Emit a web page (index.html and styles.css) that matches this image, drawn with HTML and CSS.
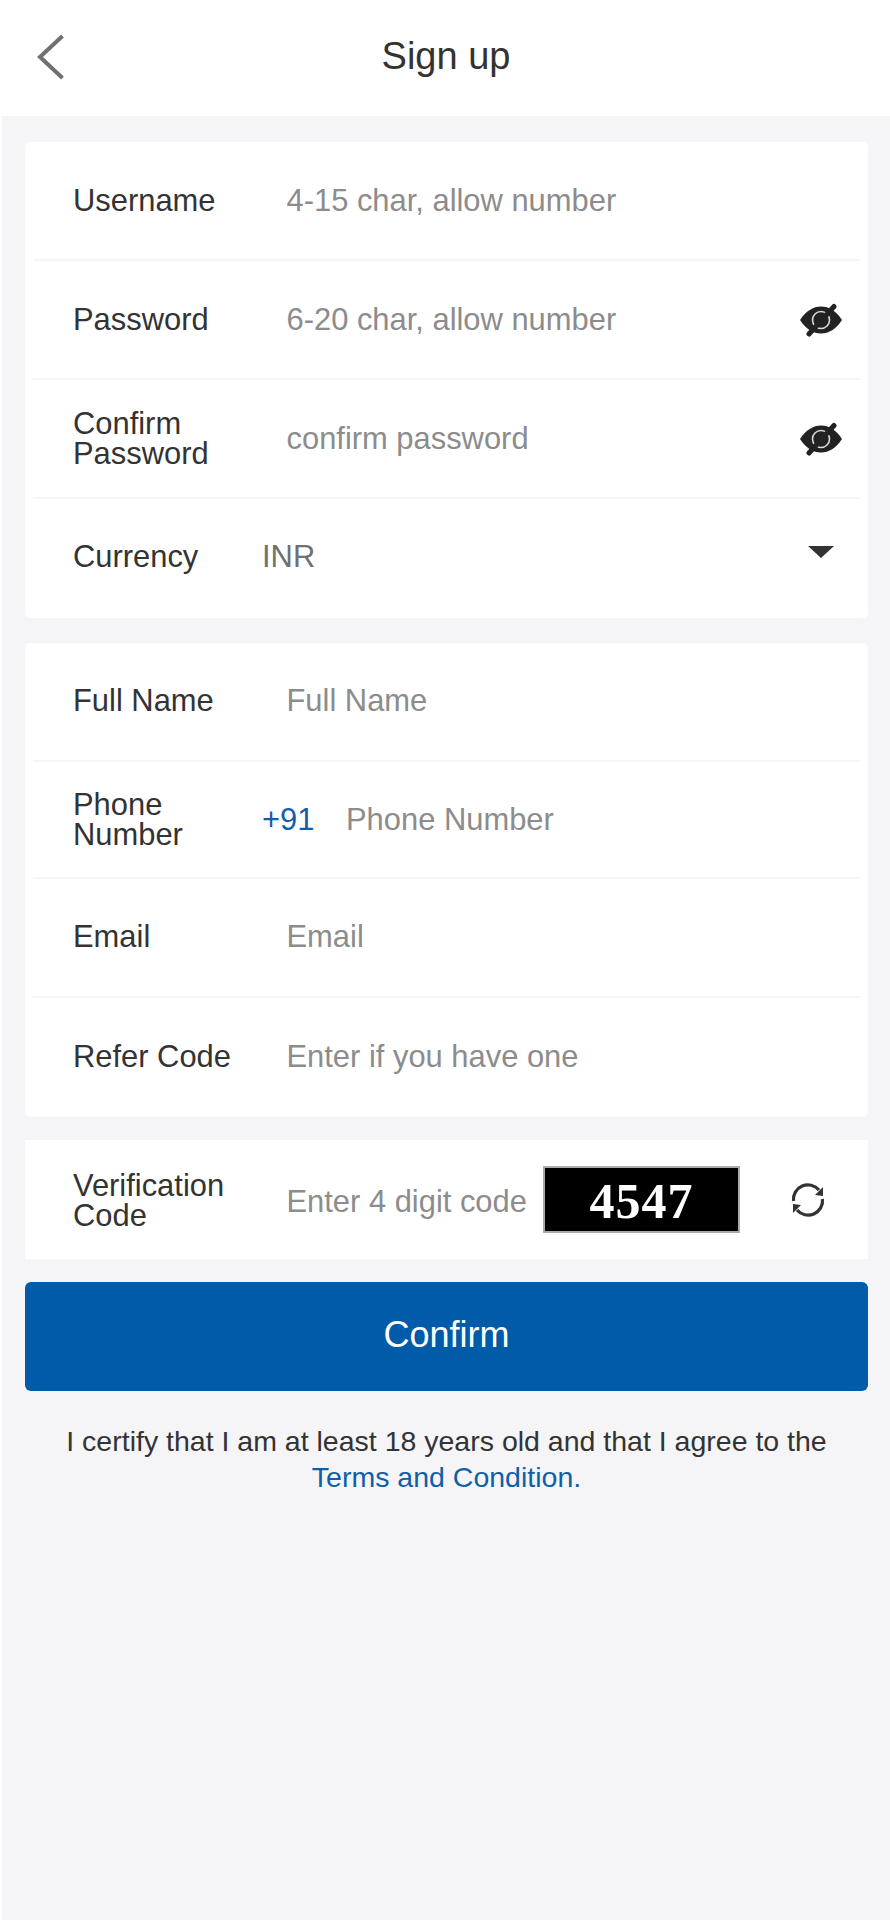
FILE: index.html
```html
<!DOCTYPE html>
<html lang="en">
<head>
    <meta charset="UTF-8">
    <meta name="viewport" content="width=device-width, initial-scale=1.0">
    <title>Sign up</title>
    <link rel="stylesheet" href="styles.css">
</head>

<body>
    <div class="header">
        <svg class="back" viewBox="0 0 28 46"><path d="M25.5 2 L3 23 L25.5 44"/></svg>
        <h1>Sign up</h1>
    </div>

    <div class="content">
        <div class="card">
            <div class="row">
                <label>Username</label>
                <input type="text" placeholder="4-15 char, allow number">
            </div>
            <div class="row">
                <label>Password</label>
                <input type="text" placeholder="6-20 char, allow number">
                <svg class="eye" viewBox="0 0 44 34">
                    <path d="M1 17 C7 8 14 3.5 22 3.5 C30 3.5 37 8 43 17 C37 26 30 30.5 22 30.5 C14 30.5 7 26 1 17 Z"/>
                    <circle class="ring" cx="22" cy="17" r="8.5"/>
                    <circle cx="22" cy="17" r="6.5"/>
                    <path class="slash" d="M10 31 L35 3.5"/>
                </svg>
            </div>
            <div class="row">
                <label>Confirm Password</label>
                <input type="text" placeholder="confirm password">
                <svg class="eye" viewBox="0 0 44 34">
                    <path d="M1 17 C7 8 14 3.5 22 3.5 C30 3.5 37 8 43 17 C37 26 30 30.5 22 30.5 C14 30.5 7 26 1 17 Z"/>
                    <circle class="ring" cx="22" cy="17" r="8.5"/>
                    <circle cx="22" cy="17" r="6.5"/>
                    <path class="slash" d="M10 31 L35 3.5"/>
                </svg>
            </div>
            <div class="row row-select">
                <label class="label-short">Currency</label>
                <span class="value">INR</span>
                <span class="caret"></span>
            </div>
        </div>

        <div class="card card-form">
            <div class="row">
                <label>Full Name</label>
                <input type="text" placeholder="Full Name">
            </div>
            <div class="row row-phone">
                <label class="label-short">Phone Number</label>
                <span class="code">+91</span>
                <input type="text" placeholder="Phone Number">
            </div>
            <div class="row">
                <label>Email</label>
                <input type="text" placeholder="Email">
            </div>
            <div class="row">
                <label>Refer Code</label>
                <input type="text" placeholder="Enter if you have one">
            </div>
        </div>

        <div class="card card-square">
            <div class="row">
                <label class="label-code">Verification Code</label>
                <input class="input-code" type="text" placeholder="Enter 4 digit code">
                <div class="captcha">4547</div>
                <svg class="refresh" viewBox="0 0 36 36">
                    <path class="arc" d="M3.5 19 A14.5 14.5 0 0 1 29 8"/>
                    <path class="arc" d="M32.5 17 A14.5 14.5 0 0 1 7 28"/>
                    <path class="tip" d="M33 5 L33 14 L25 13 Z"/>
                    <path class="tip" d="M3 31 L3 22 L11 23 Z"/>
                </svg>
            </div>
        </div>

        <button class="confirm">Confirm</button>

        <p class="terms">I certify that I am at least 18 years old and that I agree to the <a href="#">Terms and Condition.</a></p>
    </div>
</body>
</html>
```

FILE: styles.css
```css
* {
    box-sizing: border-box;
}

body {
    margin: 0;
    height: 1920px;
    display: flex;
    flex-direction: column;
    background: #fff;
    font-family: "Liberation Sans", Arial, sans-serif;
    color: #333;
}

.header {
    height: 116px;
    flex-shrink: 0;
    display: flex;
    align-items: center;
    justify-content: center;
    position: relative;
}

.header h1 {
    margin: 0 0 4px 2px;
    font-size: 38px;
    font-weight: normal;
}

.back {
    position: absolute;
    left: 37px;
    top: 34px;
    width: 28px;
    height: 46px;
}

.back path {
    fill: none;
    stroke: #707070;
    stroke-width: 4;
}

.content {
    flex: 1;
    margin-left: 2px;
    padding: 26px 22px 0 23px;
    background: #f5f5f7;
}

.card {
    background: #fff;
    border-radius: 5px;
    padding: 0 8px;
    margin-bottom: 25px;
}

.card-form {
    margin-bottom: 23px;
}

.card-form .row {
    height: 118.5px;
}

.card-form .row-phone {
    height: 117.5px;
    padding-top: 2px;
}

.card-form .row:last-child {
    height: 119.5px;
}

.card-square {
    border-radius: 0;
    margin-bottom: 23px;
}

.row {
    height: 119px;
    display: flex;
    align-items: center;
    padding-left: 40px;
    padding-right: 8px;
    border-bottom: 2px solid #f5f5f7;
    font-size: 30.9px;
}

.row:last-child {
    border-bottom: none;
}

.row-select {
    padding-bottom: 3px;
}

.row label {
    width: 213.5px;
    flex-shrink: 0;
    line-height: 30px;
    padding-right: 20px;
}

.row .label-short {
    width: 189px;
    padding-right: 40px;
}

.row .label-code {
    margin-top: 2px;
}

.row input {
    flex: 1;
    min-width: 0;
    border: none;
    outline: none;
    padding: 0;
    background: transparent;
    font-family: inherit;
    font-size: 30.9px;
    color: #333;
}

.row input::placeholder {
    color: #8c8c8c;
    opacity: 1;
}

.row .input-code {
    flex: none;
    width: 256.5px;
    margin-top: 5px;
}

.value {
    flex: 1;
    color: #707070;
}

.code {
    width: 84px;
    flex-shrink: 0;
    color: #0f5fb0;
}

.eye {
    width: 44px;
    height: 34px;
    flex-shrink: 0;
    margin-right: 9px;
}

.eye path,
.eye circle {
    fill: #222;
}

.eye .ring {
    fill: none;
    stroke: #d8d8d8;
    stroke-width: 1.6;
}

.eye .slash {
    fill: none;
    stroke: #222;
    stroke-width: 5;
    stroke-linecap: round;
}

.caret {
    width: 0;
    height: 0;
    margin: 0 18px 11px 0;
    border-left: 13px solid transparent;
    border-right: 13px solid transparent;
    border-top: 12px solid #333;
}

.captcha {
    width: 197px;
    height: 67px;
    flex-shrink: 0;
    border: 2px solid #aaa;
    background: #000;
    color: #fff;
    font-family: "Liberation Serif", serif;
    font-weight: bold;
    font-size: 50px;
    letter-spacing: 1px;
    line-height: 67px;
    text-align: center;
}

.refresh {
    width: 36px;
    height: 36px;
    flex-shrink: 0;
    margin-left: 50px;
}

.refresh .arc {
    fill: none;
    stroke: #333;
    stroke-width: 3.2;
}

.refresh .tip {
    fill: #333;
}

.confirm {
    display: block;
    width: 100%;
    height: 109px;
    padding-bottom: 4px;
    border: none;
    border-radius: 6px;
    background: #015ba9;
    color: #fff;
    font-family: inherit;
    font-size: 36px;
}

.terms {
    margin: 32px 0 0 0;
    padding: 0 10px;
    text-align: center;
    font-size: 28.5px;
    line-height: 36px;
}

.terms a {
    color: #0f5fa8;
    text-decoration: none;
}
```
